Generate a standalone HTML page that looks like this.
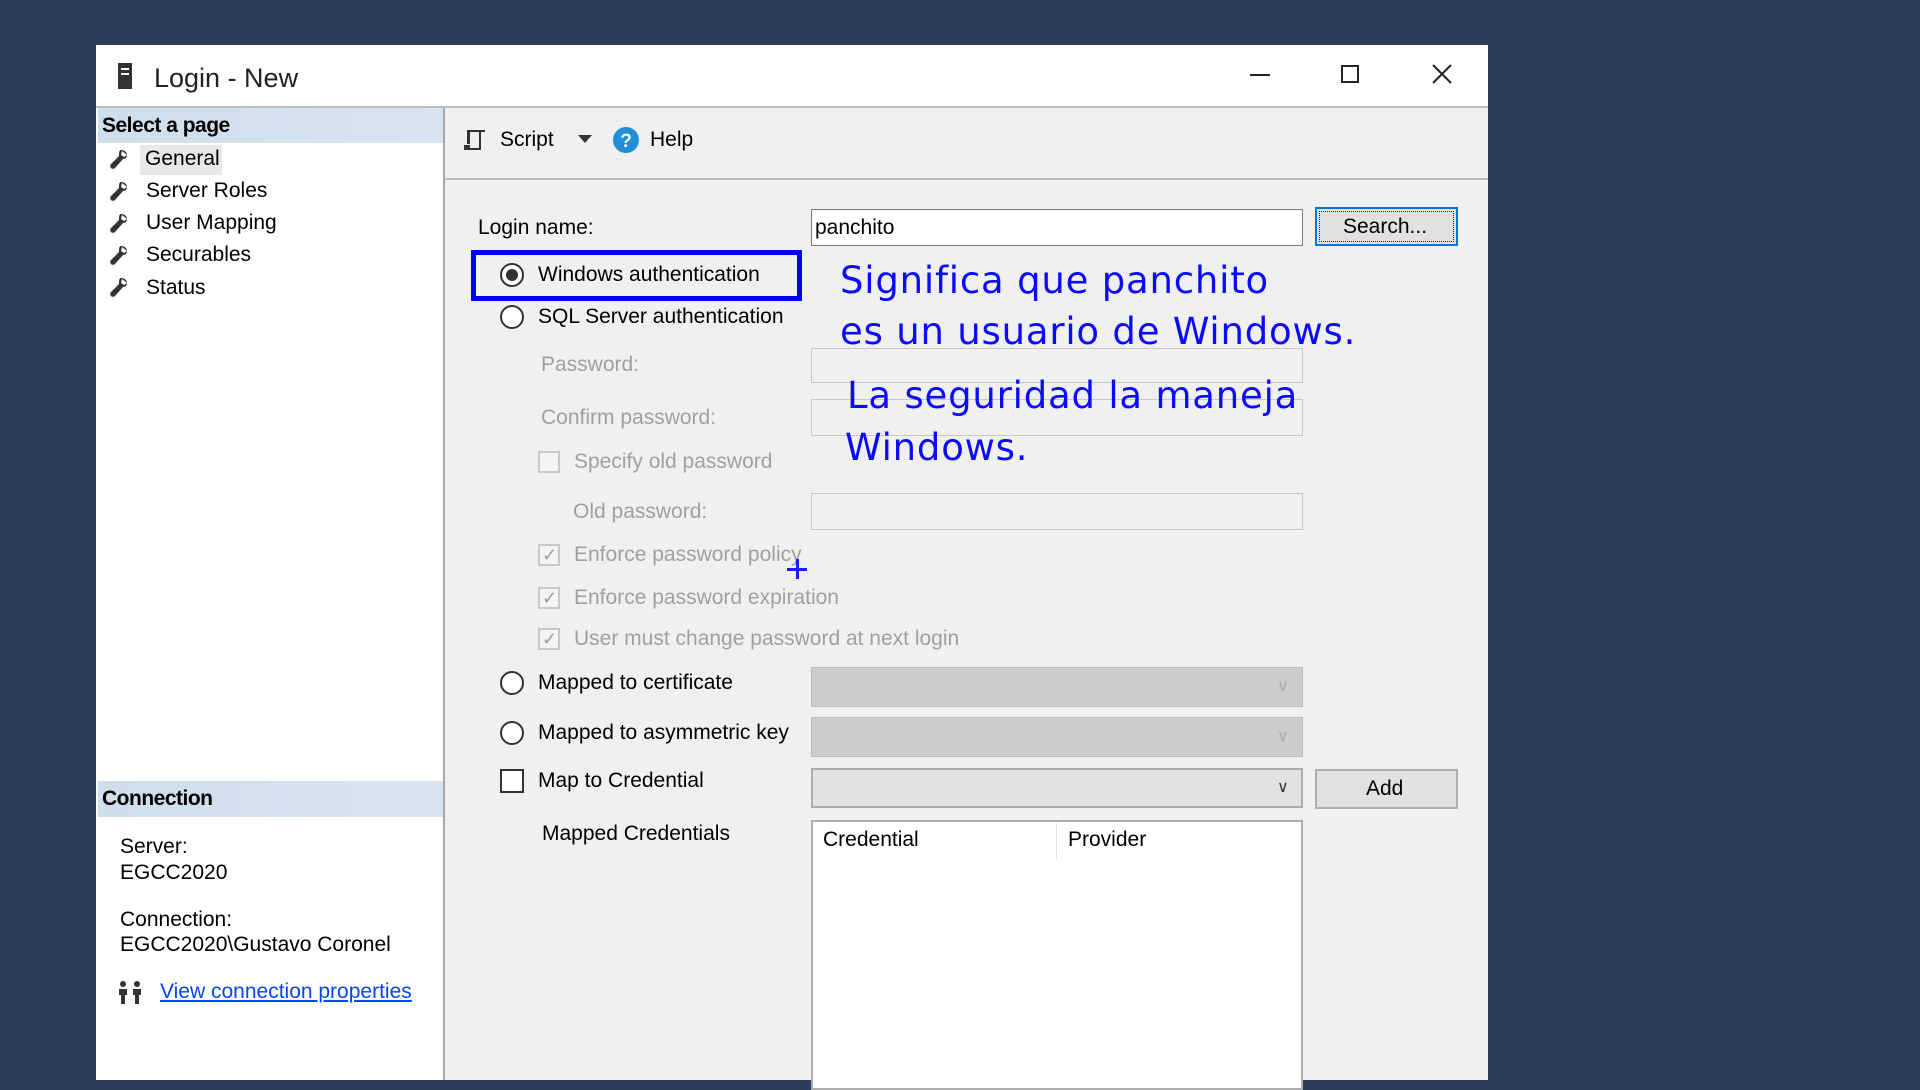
<!DOCTYPE html>
<html><head><meta charset="utf-8"><style>
*{margin:0;padding:0;box-sizing:border-box}
body{width:1920px;height:1080px;background:#2d3c58;position:relative;overflow:hidden;font-family:"Liberation Sans",sans-serif;font-size:21px;color:#000}
.a{position:absolute;white-space:nowrap}
.t{position:absolute;white-space:nowrap;line-height:24px;height:24px}
.dis{color:#a0a0a0}
.box{position:absolute;border:1px solid #c8c8c8;background:#f0f0f0}
.radio{position:absolute;width:24px;height:24px;border:2px solid #333;border-radius:50%;background:#fff}
.chk{position:absolute;width:22px;height:22px;border:2px solid #c8c8c8;background:#f4f4f4}
.ann{position:absolute;white-space:nowrap;color:#0a0aff;font-family:"DejaVu Sans",sans-serif;font-size:37px;letter-spacing:0.8px;line-height:44px}
.wr{position:absolute;width:18px;height:20px}
</style></head><body>
<div class="a" style="left:96px;top:45px;width:1392px;height:1035px;background:#fff"></div>
<div class="a" style="left:118px;top:63px;width:14px;height:26px;background:#333"></div>
<div class="a" style="left:121px;top:68px;width:8px;height:2px;background:#fff"></div>
<div class="a" style="left:121px;top:73px;width:8px;height:2px;background:#fff"></div>
<div class="t" style="left:154px;top:63px;font-size:27px;line-height:30px;height:30px;color:#222">Login - New</div>
<div class="a" style="left:1250px;top:74px;width:20px;height:2px;background:#222"></div>
<div class="a" style="left:1341px;top:65px;width:18px;height:18px;border:2px solid #222"></div>
<svg class="a" style="left:1432px;top:64px" width="20" height="20"><path d="M1 1L19 19M19 1L1 19" stroke="#222" stroke-width="2"/></svg>
<div class="a" style="left:96px;top:106px;width:1392px;height:2px;background:#bcbcbc"></div>
<div class="a" style="left:98px;top:108px;width:345px;height:972px;background:#fff"></div>
<div class="a" style="left:98px;top:108px;width:345px;height:35px;background:linear-gradient(90deg,#cfdeec,#d8e4ef)"></div>
<div class="t" style="left:102px;top:114px;font-weight:bold;letter-spacing:-0.5px">Select a page</div>
<div class="a" style="left:140px;top:145px;width:82px;height:30px;background:#e8e8e8"></div>
<svg width="0" height="0" style="position:absolute"><defs><symbol id="w" viewBox="0 0 18 20"><path d="M11 1c3 0 6 2 6 5s-2 4-4 4l-8 9c-1 1-3 1-4 0s-1-3 0-4l8-8c0-3 0-6 2-6zM12 2l-1 4 3 2 3-2" fill="#333"/></symbol></defs></svg>
<svg class="wr" style="left:110px;top:149px"><use href="#w"/></svg>
<svg class="wr" style="left:110px;top:181px"><use href="#w"/></svg>
<svg class="wr" style="left:110px;top:213px"><use href="#w"/></svg>
<svg class="wr" style="left:110px;top:245px"><use href="#w"/></svg>
<svg class="wr" style="left:110px;top:277px"><use href="#w"/></svg>
<div class="t" style="left:145px;top:147px">General</div>
<div class="t" style="left:146px;top:179px">Server Roles</div>
<div class="t" style="left:146px;top:211px">User Mapping</div>
<div class="t" style="left:146px;top:243px">Securables</div>
<div class="t" style="left:146px;top:276px">Status</div>
<div class="a" style="left:98px;top:781px;width:345px;height:36px;background:linear-gradient(90deg,#cfdeec,#d8e4ef)"></div>
<div class="t" style="left:102px;top:787px;font-weight:bold;letter-spacing:-0.5px">Connection</div>
<div class="t" style="left:120px;top:835px">Server:</div>
<div class="t" style="left:120px;top:861px">EGCC2020</div>
<div class="t" style="left:120px;top:908px">Connection:</div>
<div class="t" style="left:120px;top:933px">EGCC2020\Gustavo Coronel</div>
<svg class="a" style="left:116px;top:980px" width="28" height="26"><circle cx="7" cy="4" r="3" fill="#333"/><circle cx="21" cy="4" r="3" fill="#333"/><path d="M3 9h8v6H9v9H5v-9H3zM17 9h8v6h-2v9h-4v-9h-2z" fill="#333"/></svg>
<div class="t" style="left:160px;top:980px;color:#0645ff;text-decoration:underline">View connection properties</div>
<div class="a" style="left:443px;top:108px;width:2px;height:972px;background:#a8a8a8"></div>
<div class="a" style="left:445px;top:108px;width:1043px;height:972px;background:#f0f0f0"></div>
<div class="a" style="left:445px;top:178px;width:1043px;height:2px;background:#bdbdbd"></div>
<svg class="a" style="left:462px;top:127px" width="26" height="26"><path d="M5 3h18v2h-4v18H5v-2h12V5H8v12H5z" fill="#333"/><rect x="2" y="18" width="6" height="5" fill="#333"/></svg>
<div class="t" style="left:500px;top:128px">Script</div>
<svg class="a" style="left:578px;top:135px" width="14" height="9"><path d="M0 0h14L7 8z" fill="#333"/></svg>
<svg class="a" style="left:612px;top:126px" width="28" height="28"><circle cx="14" cy="14" r="13" fill="#1e8fd8"/><text x="14" y="21" font-family="Liberation Sans" font-weight="bold" font-size="19" fill="#fff" text-anchor="middle">?</text></svg>
<div class="t" style="left:650px;top:128px">Help</div>
<div class="t" style="left:478px;top:216px">Login name:</div>
<div class="a" style="left:811px;top:209px;width:492px;height:37px;background:#fff;border:1px solid #7a7a7a"></div>
<div class="t" style="left:815px;top:216px">panchito</div>
<div class="a" style="left:1315px;top:207px;width:143px;height:39px;background:#e1e1e1;border:2px solid #0078d7"></div>
<div class="a" style="left:1319px;top:211px;width:135px;height:31px;border:1px dotted #222"></div>
<div class="t" style="left:1343px;top:215px">Search...</div>
<div class="a" style="left:471px;top:250px;width:331px;height:51px;border:5px solid #0000f5"></div>
<div class="radio" style="left:500px;top:263px"></div><div class="a" style="left:506px;top:269px;width:12px;height:12px;border-radius:50%;background:#333"></div>
<div class="t" style="left:538px;top:263px">Windows authentication</div>
<div class="radio" style="left:500px;top:305px"></div>
<div class="t" style="left:538px;top:305px">SQL Server authentication</div>
<div class="t dis" style="left:541px;top:353px">Password:</div>
<div class="box" style="left:811px;top:348px;width:492px;height:35px"></div>
<div class="t dis" style="left:541px;top:406px">Confirm password:</div>
<div class="box" style="left:811px;top:399px;width:492px;height:37px"></div>
<div class="chk" style="left:538px;top:451px"></div>
<div class="t dis" style="left:574px;top:450px">Specify old password</div>
<div class="t dis" style="left:573px;top:500px">Old password:</div>
<div class="box" style="left:811px;top:493px;width:492px;height:37px"></div>
<div class="chk" style="left:538px;top:544px"></div><div class="t dis" style="left:542px;top:543px;font-size:18px">✓</div>
<div class="t dis" style="left:574px;top:543px">Enforce password policy</div>
<div class="chk" style="left:538px;top:587px"></div><div class="t dis" style="left:542px;top:586px;font-size:18px">✓</div>
<div class="t dis" style="left:574px;top:586px">Enforce password expiration</div>
<div class="chk" style="left:538px;top:628px"></div><div class="t dis" style="left:542px;top:627px;font-size:18px">✓</div>
<div class="t dis" style="left:574px;top:627px">User must change password at next login</div>
<div class="a" style="left:787px;top:568px;width:20px;height:3px;background:#1a1aff"></div>
<div class="a" style="left:796px;top:559px;width:3px;height:20px;background:#1a1aff"></div>
<div class="radio" style="left:500px;top:671px"></div>
<div class="t" style="left:538px;top:671px">Mapped to certificate</div>
<div class="a" style="left:811px;top:667px;width:492px;height:40px;background:#cccccc;border:1px solid #bdbdbd"></div>
<div class="t" style="left:1277px;top:675px;color:#aaa;font-size:16px">∨</div>
<div class="radio" style="left:500px;top:721px"></div>
<div class="t" style="left:538px;top:721px">Mapped to asymmetric key</div>
<div class="a" style="left:811px;top:717px;width:492px;height:40px;background:#cccccc;border:1px solid #bdbdbd"></div>
<div class="t" style="left:1277px;top:725px;color:#aaa;font-size:16px">∨</div>
<div class="a" style="left:500px;top:769px;width:24px;height:24px;border:2px solid #333;background:#fff"></div>
<div class="t" style="left:538px;top:769px">Map to Credential</div>
<div class="a" style="left:811px;top:768px;width:492px;height:40px;background:#e1e1e1;border:2px solid #adadad"></div>
<div class="t" style="left:1277px;top:776px;color:#333;font-size:16px">∨</div>
<div class="a" style="left:1315px;top:769px;width:143px;height:40px;background:#e1e1e1;border:2px solid #adadad"></div>
<div class="t" style="left:1366px;top:777px">Add</div>
<div class="t" style="left:542px;top:822px">Mapped Credentials</div>
<div class="a" style="left:811px;top:820px;width:492px;height:270px;background:#fff;border:2px solid #adadad"></div>
<div class="t" style="left:823px;top:828px">Credential</div>
<div class="a" style="left:1056px;top:823px;width:1px;height:36px;background:#e0e0e0"></div>
<div class="t" style="left:1068px;top:828px">Provider</div>
<div class="ann" style="left:840px;top:259px">Significa que panchito</div>
<div class="ann" style="left:840px;top:310px">es un usuario de Windows.</div>
<div class="ann" style="left:847px;top:374px">La seguridad la maneja</div>
<div class="ann" style="left:845px;top:426px">Windows.</div>
</body></html>
